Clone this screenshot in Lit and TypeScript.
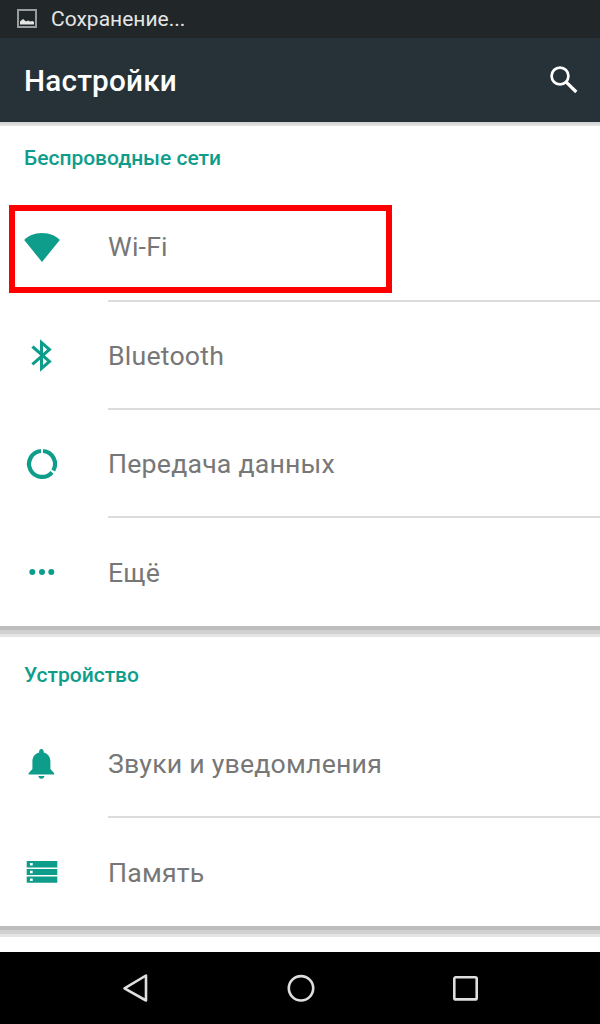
import { LitElement, html, css, svg } from "lit";
import { customElement } from "lit/decorators.js";

const icons = {
  wifi: svg`<path d="M1.200 11C5 7 11 4 19 4s14 3 17.800 7L19 33Z"/>`,
  bt: svg`<path fill="none" stroke="currentColor" stroke-width="3" stroke-linecap="square" stroke-miterlimit="8" d="M10.500 10.500 26.500 24.500 18.500 31.500V5.500L26.500 12.500 10.500 26.500"/>`,
  data: svg`<path fill="none" stroke="currentColor" stroke-width="4.200" d="M18 6A13 13 0 1 0 28.960 27.360"/><path fill="none" stroke="currentColor" stroke-width="4.200" d="M20 6A13 13 0 0 1 30.260 25.500"/>`,
  more: svg`<circle cx="9.300" cy="18" r="3"/><circle cx="19" cy="18" r="3"/><circle cx="28.300" cy="18" r="3"/>`,
  bell: svg`<path transform="translate(.4 0)" d="M18 4c1.400 0 2.300 1 2.300 2.400v1C24.700 8.500 27 12 27 16.500V24l3.800 4.300v1.200H5.200v-1.200L9 24v-7.500C9 12 11.300 8.500 15.700 7.400v-1C15.700 5 16.600 4 18 4Zm-3 27h6c0 1.600-1.400 2.800-3 2.800s-3-1.200-3-2.800Z"/>`,
  storage: svg`<path fill-rule="evenodd" d="M3.700 7h30.600v6.500H3.700Zm3.300 2v2.600h2.700V9ZM3.700 15h30.600v6H3.700Zm3.300 1.800v2.500h2.700v-2.500ZM3.700 22.400h30.600v6.400H3.700Zm3.300 2v2.500h2.700v-2.500Z"/>`,
};

@customElement("app-root")
export class AppRoot extends LitElement {
  static styles = css`
    :host { display: block; width: 600px; height: 1024px; font-family: Roboto, "Noto Sans", sans-serif; background: #fff; position: relative; overflow: hidden; }
    .page { display: flex; flex-direction: column; height: 1024px; }
    .status { height: 38px; background: #212729; color: #e4e5e5; display: flex; align-items: center; padding-left: 17px; gap: 14px; font-size: 21px; box-sizing: border-box; flex: none; }
    .status svg { width: 20px; height: 20px; display: block; }
    .bar { height: 84px; background: #263238; color: #fff; display: flex; align-items: center; justify-content: space-between; padding: 0 20px 0 24px; flex: none; }
    .bar h1 { margin: 0; font-size: 29.700px; font-weight: 500; letter-spacing: .2px; }
    .bar svg { width: 30px; height: 30px; display: block; }
    .shadow { height: 4px; background: linear-gradient(#cfd1d1, #e6e6e6); flex: none; }
    .content { flex: 1; display: flex; flex-direction: column; min-height: 0; }
    .head { height: 68px; box-sizing: border-box; padding: 20px 0 0 24px; font-size: 21px; line-height: 24px; font-weight: 500; color: #0f9d8b; flex: none; }
    .head.second { height: 73px; padding-top: 26px; }
    .row { height: 106px; margin-bottom: 2px; display: flex; align-items: center; position: relative; flex: none; }
    .row .ic { width: 36px; height: 36px; margin-left: 23px; color: #0f9d8b; fill: #0f9d8b; display: block; flex: none; overflow: visible; }
    .row .label { margin-left: 49px; padding-top: 2px; font-size: 26.700px; color: #777; letter-spacing: .2px; }
    .row.top .label { padding-top: 0; }
    .row::after { content: ""; position: absolute; left: 108px; right: 0; bottom: -2px; height: 2px; background: #dcdcdc; }
    .row.last { margin-bottom: 0; height: 108px; }
    .row.last::after { display: none; }
    .sep { height: 11px; flex: none; background: linear-gradient(#bdbdbd 0 4px, #d0d0d0 4px 8px, #e4e4e4 8px); }
    .nav { height: 72px; background: #000; flex: none; display: flex; align-items: center; justify-content: space-between; padding: 0 118px 0 120px; box-sizing: border-box; }
    .nav svg { width: 32px; height: 32px; display: block; fill: none; stroke: #dedede; stroke-width: 2.600; stroke-linejoin: round; }
    .spacer { height: 15px; flex: none; }
    .mark { position: absolute; left: 9px; top: 205px; width: 383px; height: 88px; box-sizing: border-box; border: 6px solid #fe0000; }
  `;

  private row(icon: keyof typeof icons, label: string, cls = "") {
    return html`<div class="row ${cls}">
      <svg class="ic" viewBox="0 0 36 36">${icons[icon]}</svg>
      <span class="label">${label}</span>
    </div>`;
  }

  render() {
    return html`<div class="page">
      <div class="status">
        <svg viewBox="0 0 20 20"><path fill="#9a9d9e" fill-rule="evenodd" d="M0 0h20v19H0Zm2 2v15h16V2Z"/><path fill="#e4e5e5" d="M3 15.500v-3l3-2.500 3 2.500 2-1 2 1 2.500-.500 1.500 1v2.500Z"/></svg>
        <span>Сохранение...</span>
      </div>
      <div class="bar">
        <h1>Настройки</h1>
        <svg viewBox="0 0 30 30"><circle cx="10" cy="11" r="8.400" fill="none" stroke="#fff" stroke-width="2.700"/><path d="M16.200 17.200 26.300 27" stroke="#fff" stroke-width="3.200" fill="none"/></svg>
      </div>
      <div class="shadow"></div>
      <div class="content">
        <div class="head">Беспроводные сети</div>
        ${this.row("wifi", "Wi-Fi", "top")}
        ${this.row("bt", "Bluetooth")}
        ${this.row("data", "Передача данных")}
        ${this.row("more", "Ещё", "last")}
        <div class="sep"></div>
        <div class="head second">Устройство</div>
        ${this.row("bell", "Звуки и уведомления")}
        ${this.row("storage", "Память", "last")}
        <div class="sep"></div>
        <div class="spacer"></div>
      </div>
      <div class="nav">
        <svg viewBox="0 0 32 32"><path d="M26 3.500v25L4.500 16.300Z"/></svg>
        <svg viewBox="0 0 32 32"><circle cx="16" cy="16.300" r="12.200"/></svg>
        <svg viewBox="0 0 32 32"><rect x="4.300" y="5.300" width="22.400" height="22.100" rx="1.500"/></svg>
      </div>
    </div>
    <div class="mark"></div>`;
  }
}
